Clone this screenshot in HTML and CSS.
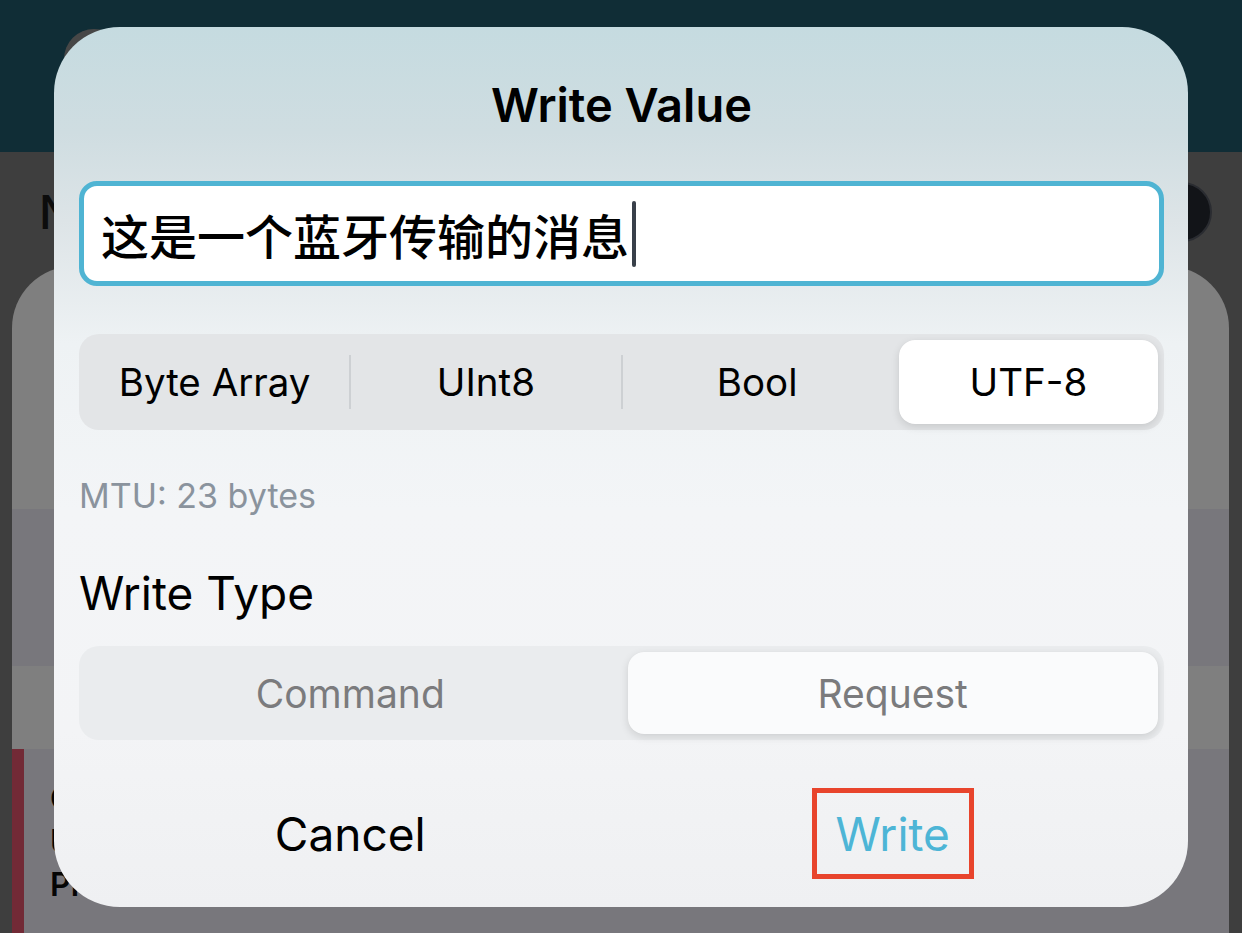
FILE: index.html
```html
<!DOCTYPE html>
<html lang="zh">
<head>
<meta charset="utf-8">
<title>Write Value</title>
<link rel="stylesheet" href="styles.css">
</head>
<body>
<div class="screen">
  <div class="topbar"></div>
  <div class="navrow"><span class="navtitle">N</span></div>
  <div class="avatar"></div>
  <div class="roundbtn"></div>

  <div class="sheet">
    <div class="band band-a" style="height:243px"></div>
    <div class="band band-b" style="height:157px"></div>
    <div class="band band-a" style="height:83px"></div>
    <div class="band band-b band-last">
      <div class="stripe"></div>
      <div class="rowtext">
        <div>C</div>
        <div>U</div>
        <div>Pr</div>
      </div>
    </div>
  </div>

  <div class="dialog">
    <div class="title">Write Value</div>
    <div class="field"><span class="fieldtext">这是一个蓝牙传输的消息</span><span class="caret"></span></div>

    <div class="segmented seg-format">
      <div class="seg"><div class="seg-label">Byte Array</div></div>
      <div class="seg"><div class="seg-label">UInt8</div></div>
      <div class="seg no-div"><div class="seg-label">Bool</div></div>
      <div class="seg on no-div"><div class="seg-label">UTF-8</div></div>
    </div>

    <div class="mtu">MTU: 23 bytes</div>
    <div class="section">Write Type</div>

    <div class="segmented seg-type">
      <div class="seg no-div"><div class="seg-label">Command</div></div>
      <div class="seg on no-div"><div class="seg-label">Request</div></div>
    </div>

    <div class="actions">
      <div class="action"><span class="btn cancel">Cancel</span></div>
      <div class="action"><span class="btn write">Write</span></div>
    </div>
  </div>
</div>
</body>
</html>
```

FILE: styles.css
```css
* { box-sizing: border-box; }
html, body { margin: 0; padding: 0; }
body {
  font-family: "Inter", "Noto Sans CJK SC", sans-serif;
  background: #3e3e3e;
}
.screen {
  position: relative;
  width: 1242px;
  height: 933px;
  overflow: hidden;
  background: #3e3e3e;
}
.topbar {
  height: 152px;
  background: #102d36;
}
.navrow {
  height: 113px;
  padding-left: 39px;
  display: flex;
  align-items: center;
  padding-top: 6px;
}
.navtitle {
  font-size: 46px;
  font-weight: 500;
  color: #0c0c0c;
  line-height: 1;
}
.avatar {
  position: absolute;
  left: 64px;
  top: 29px;
  width: 60px;
  height: 60px;
  border-radius: 50%;
  background: #474747;
}
.roundbtn {
  position: absolute;
  left: 1152px;
  top: 182px;
  width: 60px;
  height: 60px;
  border-radius: 50%;
  background: #121418;
  border: 2px solid #2a2c31;
}
.sheet {
  position: absolute;
  left: 12px;
  top: 266px;
  width: 1217px;
  bottom: 0;
  border-radius: 62px 62px 0 0;
  overflow: hidden;
  display: flex;
  flex-direction: column;
}
.band-a { background: #7f7f7f; }
.band-b { background: #78777c; }
.band-last {
  flex: 1;
  display: flex;
}
.stripe {
  width: 12px;
  background: #722a36;
}
.rowtext {
  padding: 28px 0 0 26px;
  font-size: 32px;
  font-weight: 600;
  line-height: 43px;
  color: #050505;
}

.dialog {
  position: absolute;
  left: 54px;
  top: 27px;
  width: 1134px;
  height: 880px;
  border-radius: 66px;
  padding: 0 24px 0 25px;
  background: linear-gradient(180deg, #c5dbe0 0%, #cfdde1 12%, #dde4e7 22%, #eef2f4 36%, #f3f5f7 55%, #f3f4f6 80%, #eff0f2 100%);
  display: flex;
  flex-direction: column;
}
.title {
  height: 154px;
  display: flex;
  align-items: center;
  justify-content: center;
  font-size: 47px;
  font-weight: 600;
  color: #000;
}
.field {
  height: 105px;
  border: 5px solid #4fb4d3;
  border-radius: 18px;
  background: #fff;
  display: flex;
  align-items: center;
  padding-left: 17px;
}
.fieldtext {
  font-family: "Noto Sans CJK SC", sans-serif;
  font-size: 48px;
  font-weight: 500;
  color: #000;
  letter-spacing: 0;
}
.caret {
  width: 4px;
  height: 66px;
  border-radius: 2px;
  background: #39404a;
  margin-left: 3px;
}
.segmented {
  display: flex;
  border-radius: 20px;
}
.seg-format {
  margin-top: 48px;
  height: 96px;
  background: #e3e5e7;
}
.seg-type {
  margin-top: 29px;
  height: 94px;
  background: #eaecee;
}
.seg {
  flex: 1;
  padding: 6px;
  display: flex;
  position: relative;
}
.seg::after {
  content: "";
  position: absolute;
  right: -1px;
  top: 21px;
  bottom: 21px;
  width: 2px;
  background: #cdd0d3;
}
.seg.no-div::after { display: none; }
.seg-label {
  flex: 1;
  display: flex;
  align-items: center;
  justify-content: center;
  border-radius: 16px;
  font-size: 38.5px;
  color: #000;
}
.seg.on .seg-label {
  background: #fff;
  box-shadow: 0 3px 8px rgba(0, 0, 0, 0.12), 0 0 1px rgba(0, 0, 0, 0.06);
}
.seg-type .seg-label {
  color: #7b7b7d;
  font-size: 39px;
}
.seg-type .seg.on .seg-label { background: #fafbfc; }
.mtu {
  margin-top: 47px;
  font-size: 34px;
  line-height: 38px;
  color: #8a939d;
}
.section {
  margin-top: 54px;
  font-size: 46px;
  line-height: 48px;
  color: #000;
}
.actions {
  margin-top: 48px;
  height: 91px;
  display: flex;
}
.action {
  flex: 1;
  display: flex;
  align-items: center;
  justify-content: center;
}
.btn {
  font-size: 46px;
  line-height: 1;
}
.cancel { color: #000; }
.write {
  color: #4db5d6;
  width: 162px;
  height: 91px;
  border: 5px solid #e8442c;
  display: flex;
  align-items: center;
  justify-content: center;
}
```
